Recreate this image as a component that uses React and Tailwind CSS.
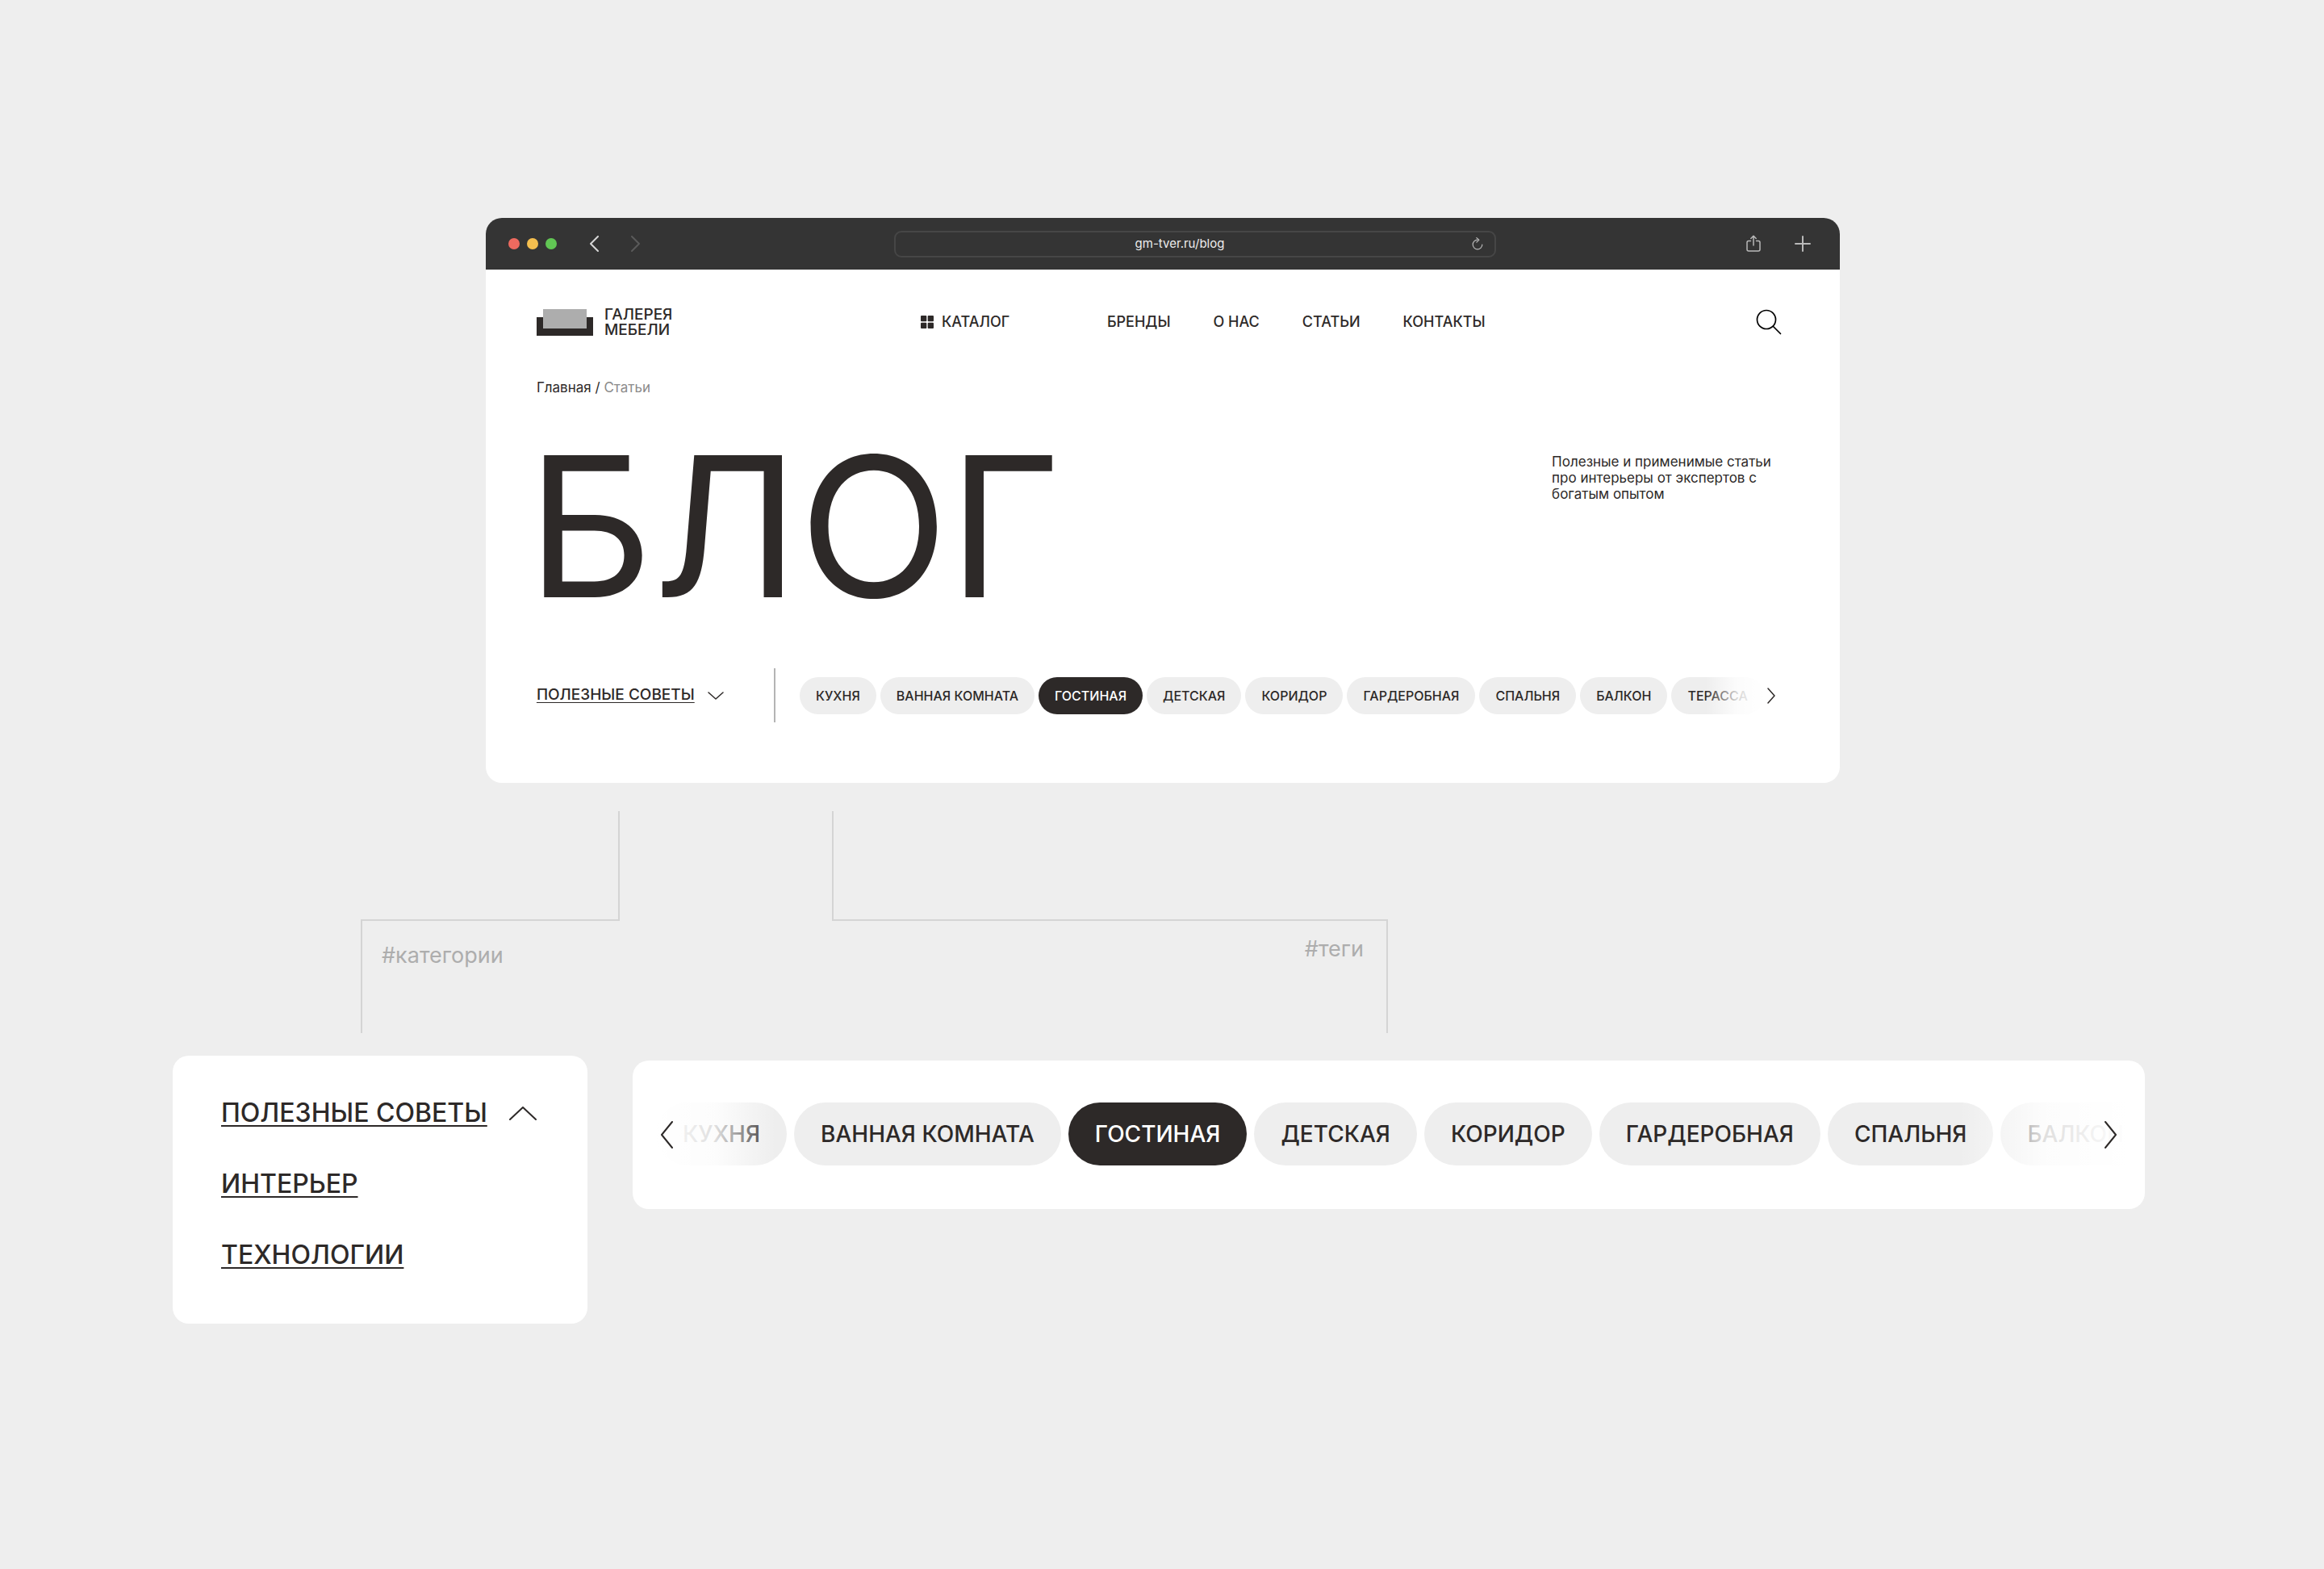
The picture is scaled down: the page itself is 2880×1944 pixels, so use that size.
import React, { useState } from 'react';

const navLinks = ['БРЕНДЫ', 'О НАС', 'СТАТЬИ', 'КОНТАКТЫ'];

const tags = [
  'КУХНЯ',
  'ВАННАЯ КОМНАТА',
  'ГОСТИНАЯ',
  'ДЕТСКАЯ',
  'КОРИДОР',
  'ГАРДЕРОБНАЯ',
  'СПАЛЬНЯ',
  'БАЛКОН',
  'ТЕРАССА',
];

const Chevron = ({ points, className, strokeWidth = 2 }) => (
  <svg className={className} fill="none" stroke="currentColor" strokeWidth={strokeWidth} strokeLinecap="round" strokeLinejoin="round" aria-hidden="true">
    <polyline points={points} />
  </svg>
);

const BrowserBar = () => (
  <div className="flex h-16 items-center bg-[#343434] pl-7 pr-9 text-[#b9b9b9]">
    <div className="flex w-[478px] shrink-0 items-center">
      <div className="flex gap-[9px]">
        <span className="size-[14px] rounded-full bg-[#ee6a5f]" />
        <span className="size-[14px] rounded-full bg-[#f5bf4f]" />
        <span className="size-[14px] rounded-full bg-[#61c654]" />
      </div>
      <button aria-label="Назад" className="ml-10 text-[#d6d6d6]">
        <Chevron points="11,1 2,10 11,19" className="h-5 w-3" />
      </button>
      <button aria-label="Вперёд" className="ml-10 text-[#5a5a5a]">
        <Chevron points="1,1 10,10 1,19" className="h-5 w-3" />
      </button>
    </div>
    <div className="flex h-[33px] flex-1 items-center rounded-[9px] border-2 border-[#464646] pr-[14px]">
      <input
        aria-label="Адрес"
        readOnly
        value="gm-tver.ru/blog"
        className="min-w-0 flex-1 bg-transparent pr-[10px] text-center text-[15px] text-[#ededed] outline-none"
      />
      <button aria-label="Обновить">
        <svg className="h-4 w-[14px]" viewBox="0 0 14 16" fill="none" stroke="currentColor" strokeWidth="1.2" strokeLinecap="round" strokeLinejoin="round">
          <path d="M7 3.2a5.8 5.8 0 1 0 5.8 5.8" />
          <path d="M5.8.6 8.8 3.3 5.9 6.2" />
        </svg>
      </button>
    </div>
    <div className="flex w-[390px] shrink-0 items-center justify-end gap-[42px]">
      <button aria-label="Поделиться">
        <svg className="h-[22px] w-[18px]" viewBox="0 0 18 22" fill="none" stroke="currentColor" strokeWidth="1.5" strokeLinecap="round" strokeLinejoin="round">
          <path d="M5.5 7.5H3a2 2 0 0 0-2 2V18a2 2 0 0 0 2 2h12a2 2 0 0 0 2-2V9.500a2 2 0 0 0-2-2h-2.500" />
          <path d="M9 13V1.500M5.800 4.500 9 1.300l3.200 3.200" />
        </svg>
      </button>
      <button aria-label="Новая вкладка">
        <svg className="size-5" viewBox="0 0 20 20" fill="none" stroke="currentColor" strokeWidth="2" strokeLinecap="round">
          <path d="M10 1v18M1 10h18" />
        </svg>
      </button>
    </div>
  </div>
);

const Header = () => (
  <header className="flex items-center pr-[8px] text-lg font-medium">
    <a href="#home" className="flex w-[476px] shrink-0 items-center gap-[14px] text-[19px] leading-[19px]">
      <svg className="h-[33px] w-[70px]" viewBox="0 0 70 33" aria-hidden="true">
        <path d="M0 10h70v23H0z" fill="#2d2928" />
        <path d="M8 0h54v24H8z" fill="#adadad" />
      </svg>
      <span>
        ГАЛЕРЕЯ
        <br />
        МЕБЕЛИ
      </span>
    </a>
    <button className="flex w-[231px] shrink-0 items-center gap-[10px]">
      <svg className="size-4" viewBox="0 0 16 16" fill="currentColor" aria-hidden="true">
        <rect width="7.300" height="7.300" rx="1" />
        <rect x="8.700" width="7.300" height="7.300" rx="1" />
        <rect y="8.700" width="7.300" height="7.300" rx="1" />
        <rect x="8.700" y="8.700" width="7.300" height="7.300" rx="1" />
      </svg>
      КАТАЛОГ
    </button>
    <nav className="flex gap-[53px] whitespace-nowrap">
      {navLinks.map((link) => (
        <a key={link} href="#nav">
          {link}
        </a>
      ))}
    </nav>
    <button aria-label="Поиск" className="ml-auto text-black">
      <svg className="size-8" viewBox="0 0 32 32" fill="none" stroke="currentColor" strokeWidth="1.7" strokeLinecap="round">
        <circle cx="13" cy="13" r="11.500" />
        <path d="m21.500 21.500 9 9" />
      </svg>
    </button>
  </header>
);

const SmallTags = ({ active, onSelect }) => (
  <div className="relative min-w-0 flex-1">
    <div className="flex gap-[5px] overflow-hidden">
      {tags.map((tag) => (
        <button
          key={tag}
          onClick={() => onSelect(tag)}
          className={
            tag === active
              ? 'h-[46px] shrink-0 rounded-full bg-[#2d2928] px-5 text-base font-medium text-white'
              : 'h-[46px] shrink-0 rounded-full bg-[#eeeeee] px-5 text-base font-medium'
          }
        >
          {tag}
        </button>
      ))}
    </div>
    <div className="pointer-events-none absolute inset-y-0 right-0 w-24 bg-linear-to-r from-white/0 from-10% via-white/80 via-50% to-white to-85%" />
    <button aria-label="Дальше" className="absolute inset-y-0 right-0">
      <Chevron points="1,1 9,10 1,19" strokeWidth={1.5} className="h-5 w-[10px]" />
    </button>
  </div>
);

const LargeTags = ({ active, onSelect }) => (
  <div className="relative min-w-0 rounded-[20px] bg-white pt-[52px] pb-[54px] pl-[29px] pr-[22px]">
    <div className="flex gap-[9px] overflow-hidden">
      {tags.slice(0, 8).map((tag) => (
        <button
          key={tag}
          onClick={() => onSelect(tag)}
          className={
            tag === active
              ? 'h-[78px] shrink-0 rounded-full bg-[#2d2928] px-[33px] text-[28px] font-medium text-white'
              : 'h-[78px] shrink-0 rounded-full bg-[#eeeeee] px-[33px] text-[28px] font-medium'
          }
        >
          {tag}
        </button>
      ))}
    </div>
    <div className="pointer-events-none absolute inset-y-0 left-7 w-[150px] bg-linear-to-l from-white/0 via-white/85 via-50% to-white" />
    <div className="pointer-events-none absolute inset-y-0 right-5 w-[210px] bg-linear-to-r from-white/0 via-white/85 via-50% to-white" />
    <button aria-label="Назад" className="absolute inset-y-0 left-[34px]">
      <Chevron points="15,1 2,17 15,33" className="h-[34px] w-4" />
    </button>
    <button aria-label="Дальше" className="absolute inset-y-0 right-[34px]">
      <Chevron points="1,1 14,17 1,33" className="h-[34px] w-4" />
    </button>
  </div>
);

const App = () => {
  const [active, setActive] = useState('ГОСТИНАЯ');

  return (
    <div className="min-h-screen bg-[#eeeeee] py-[270px] font-['Inter','Liberation_Sans',sans-serif] text-[#2d2928]">
      <main className="mr-[20.83%] ml-[20.9%] overflow-hidden rounded-[20px] bg-white">
        <BrowserBar />
        <div className="pt-[46px] pr-16 pb-[75px] pl-[63px]">
          <Header />
          <div className="mt-[52px] text-[17px] leading-5">
            <a href="#home">Главная</a> / <span className="text-[#8a8a8a]">Статьи</span>
          </div>
          <div className="mt-[72px] flex items-start justify-between">
            <h1 className="-ml-3 text-[242px] leading-[180px]">БЛОГ</h1>
            <p className="w-[293px] text-[17px] leading-5 whitespace-nowrap">
              Полезные и применимые статьи
              <br />
              про интерьеры от экспертов с
              <br />
              богатым опытом
            </p>
          </div>
          <div className="mt-[86px] flex items-center">
            <div className="flex h-[67px] w-[296px] shrink-0 items-center border-r-2 border-[#b4b4b4]">
              <button aria-expanded="false" className="flex items-center gap-4 text-[19px] font-medium whitespace-nowrap">
                <span className="underline decoration-1 underline-offset-[3px]">ПОЛЕЗНЫЕ СОВЕТЫ</span>
                <Chevron points="1,1 10,9 19,1" strokeWidth={1.5} className="h-[10px] w-5" />
              </button>
            </div>
            <div className="flex min-w-0 flex-1 pl-[30px] pr-4">
              <SmallTags active={active} onSelect={setActive} />
            </div>
          </div>
        </div>
      </main>

      <div className="mt-[35px] flex gap-[263px] pl-[447px] text-[27px] leading-[30px] text-[#adadad]">
        <div className="w-[321px]">
          <div className="h-[134px] border-r-2 border-[#d4d4d4]" />
          <div className="h-[141px] border-t-2 border-l-2 border-[#d4d4d4] pt-7 pl-6">#категории</div>
        </div>
        <div className="w-[689px]">
          <div className="h-[134px] border-l-2 border-[#d4d4d4]" />
          <div className="h-[141px] border-t-2 border-r-2 border-[#d4d4d4] pt-5 pr-7 text-right">#теги</div>
        </div>
      </div>

      <div className="mt-7 grid grid-cols-[514px_1fr] items-start gap-14 pl-[214px] pr-[222px]">
        <div className="rounded-[20px] bg-white px-[60px] pt-[51px] pb-[65px] text-[32px] leading-10 font-medium">
          <button aria-expanded="true" className="flex items-center gap-[27px] whitespace-nowrap">
            <span className="underline decoration-2 underline-offset-4">ПОЛЕЗНЫЕ СОВЕТЫ</span>
            <Chevron points="1,16 17,1 33,16" className="h-[17px] w-[34px]" />
          </button>
          <ul className="mt-12 flex flex-col gap-12">
            <li>
              <a href="#interior" className="underline decoration-2 underline-offset-4">ИНТЕРЬЕР</a>
            </li>
            <li>
              <a href="#tech" className="underline decoration-2 underline-offset-4">ТЕХНОЛОГИИ</a>
            </li>
          </ul>
        </div>
        <div className="mt-[6px]">
          <LargeTags active={active} onSelect={setActive} />
        </div>
      </div>
    </div>
  );
};

export default App;
